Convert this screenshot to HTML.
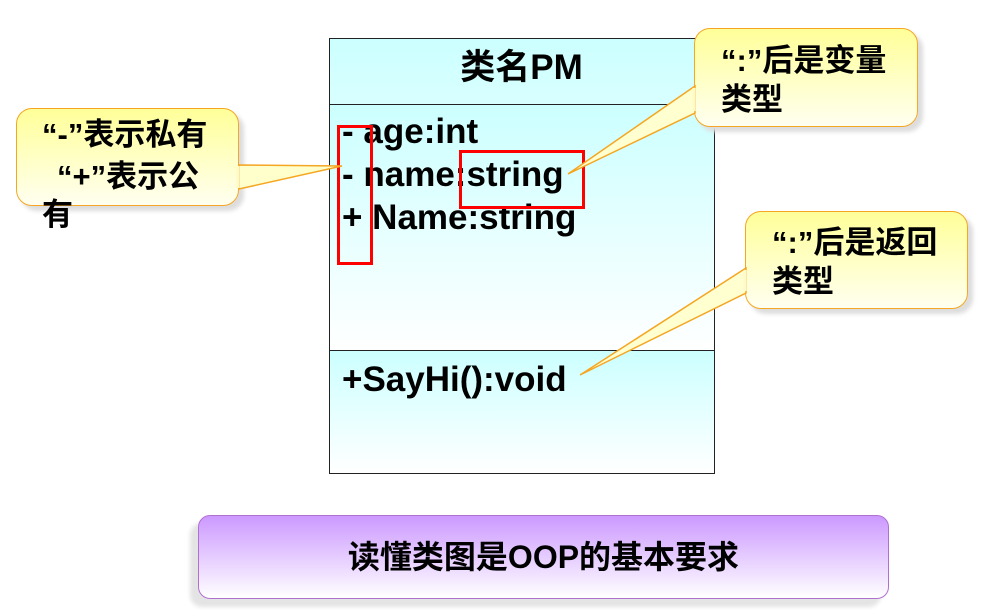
<!DOCTYPE html>
<html><head><meta charset="utf-8"><style>
body{margin:0;width:1004px;height:610px;background:#fff;position:relative;overflow:hidden;font-family:"Liberation Sans","Noto Sans CJK SC",sans-serif;font-weight:bold;color:#000}
.a{position:absolute;white-space:nowrap}
.cls{position:absolute;left:329px;top:38px;width:384px;height:434px;border:1px solid #222;background:linear-gradient(#ccffff,#fff 60%)}
.sec{position:absolute;left:0;width:384px;border-top:1px solid #222}
.call{position:absolute;border:1.5px solid #f5a623;border-radius:16px;background:linear-gradient(#ffff99,#fffff0);box-shadow:5px 5px 4px #ddd}
.t26{font-size:31px;line-height:40px}
.t30{font-size:35px;line-height:40px}
</style></head><body>
<div class="cls">
 <div class="sec" style="top:65px;height:246px;background:linear-gradient(#ccffff,#fff)"></div>
 <div class="sec" style="top:311px;height:122px;background:linear-gradient(#ccffff,#fff)"></div>
</div>
<div class="a t30" style="left:329px;width:385px;text-align:center;top:48px">类名PM</div>
<div class="a t30" style="left:342px;top:112px">- age:int</div>
<div class="a t30" style="left:342px;top:155px">- name:string</div>
<div class="a t30" style="left:342px;top:198px">+ Name:string</div>
<div class="a t30" style="left:342px;top:360px">+SayHi():void</div>
<div class="a" style="left:337px;top:125px;width:30px;height:134px;border:3px solid #f00"></div>
<div class="a" style="left:459px;top:150px;width:120px;height:53px;border:3px solid #f00"></div>

<div class="call" style="left:16px;top:108px;width:221px;height:96px"></div>
<div class="call" style="left:694px;top:28px;width:222px;height:97px"></div>
<div class="call" style="left:745px;top:211px;width:221px;height:96px"></div>
<svg class="a" style="left:0;top:0" width="1004" height="610">
 <polygon points="239,165 342,166 239,189" fill="#ffffcc" stroke="#f5a623" stroke-width="1.5"/>
 <line x1="238" y1="166" x2="238" y2="188" stroke="#fffbc8" stroke-width="3"/>
 <polygon points="695,86 568,174 695,113" fill="#ffffd0" stroke="#f5a623" stroke-width="1.5"/>
 <line x1="694" y1="88" x2="694" y2="111" stroke="#fffbc8" stroke-width="3"/>
 <polygon points="746,268 580,375 746,293" fill="#ffffd0" stroke="#f5a623" stroke-width="1.5"/>
 <line x1="745" y1="270" x2="745" y2="291" stroke="#fffbc8" stroke-width="3"/>
</svg>
<div class="a t26" style="left:42px;top:115px">“-”表示私有</div>
<div class="a t26" style="left:57px;top:157px">“+”表示公</div>
<div class="a t26" style="left:42px;top:195px">有</div>
<div class="a t26" style="left:721px;top:41px">“:”后是变量</div>
<div class="a t26" style="left:721px;top:80px">类型</div>
<div class="a t26" style="left:772px;top:223px">“:”后是返回</div>
<div class="a t26" style="left:772px;top:262px">类型</div>

<div class="a" style="left:198px;top:515px;width:689px;height:82px;border:1px solid #b070d0;border-radius:12px;background:linear-gradient(#cc99ff,#fff);box-shadow:-8px 8px 4px #e4e4e4"></div>
<div class="a" style="left:198px;width:691px;text-align:center;top:537px;font-size:32px;line-height:40px">读懂类图是OOP的基本要求</div>
</body></html>
